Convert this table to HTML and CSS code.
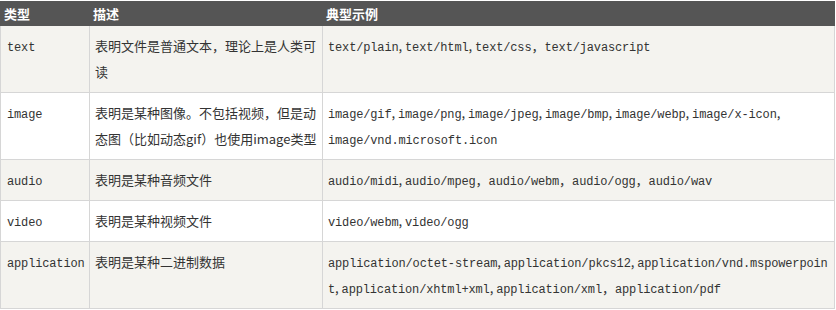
FILE: index.html
```html
<!DOCTYPE html>
<html lang="zh-CN">
<head>
    <meta charset="UTF-8">
    <title>MIME 类型</title>
    <link rel="stylesheet" href="styles.css">
</head>
<body>
    <table class="mime-table">
        <colgroup>
            <col class="col-type">
            <col class="col-desc">
            <col class="col-demo">
        </colgroup>
        <thead>
            <tr>
                <th>类型</th>
                <th>描述</th>
                <th>典型示例</th>
            </tr>
        </thead>
        <tbody>
            <tr class="odd">
                <td><code>text</code></td>
                <td>表明文件是普通文本，理论上是人类可读</td>
                <td><code>text/plain</code>, <code>text/html</code>, <code>text/css</code>，<code>text/javascript</code></td>
            </tr>
            <tr>
                <td><code>image</code></td>
                <td>表明是某种图像。不包括视频，但是动态图（比如动态gif）也使用image类型</td>
                <td><code>image/gif</code>, <code>image/png</code>, <code>image/jpeg</code>, <code>image/bmp</code>, <code>image/webp</code>, <code>image/x-icon</code>, <code>image/vnd.microsoft.icon</code></td>
            </tr>
            <tr class="odd">
                <td><code>audio</code></td>
                <td>表明是某种音频文件</td>
                <td><code>audio/midi</code>, <code>audio/mpeg</code>，<code>audio/webm</code>，<code>audio/ogg</code>，<code>audio/wav</code></td>
            </tr>
            <tr>
                <td><code>video</code></td>
                <td>表明是某种视频文件</td>
                <td><code>video/webm</code>, <code>video/ogg</code></td>
            </tr>
            <tr class="odd">
                <td><code>application</code></td>
                <td>表明是某种二进制数据</td>
                <td class="break"><code>application/octet-stream</code>, <code>application/pkcs12</code>, <code>application/vnd.mspowerpoint</code>, <code>application/xhtml+xml</code>, <code>application/xml</code>，<code>application/pdf</code></td>
            </tr>
        </tbody>
    </table>
</body>
</html>
```

FILE: styles.css
```css
body {
    margin: 0;
    padding-top: 1px;
    background: #fff;
    font-family: "Noto Sans CJK SC", "Noto Sans", sans-serif;
    font-size: 13px;
    color: #333;
}
.mime-table {
    width: 835px;
    table-layout: fixed;
    border-collapse: separate;
    border-spacing: 0;
}
.col-type {
    width: 90px;
}
.col-desc {
    width: 233px;
}
.col-demo {
    width: 512px;
}
.mime-table th {
    background: #555;
    color: #fff;
    font-weight: bold;
    text-align: left;
    height: 25px;
    line-height: 25px;
    padding: 0 3px;
}
.mime-table th:first-child {
    padding-left: 4px;
}
.mime-table td {
    padding: 7px 2px 7px 5px;
    line-height: 26px;
    vertical-align: top;
    border-right: 1px solid #d6d6d6;
    border-bottom: 1px solid #d6d6d6;
}
.mime-table td:first-child {
    border-left: 1px solid #d6d6d6;
    padding-left: 6px;
}
.mime-table tr.odd td {
    background: #f4f3ef;
}
code {
    font-family: "Liberation Mono", monospace;
    font-size: 12px;
    line-height: 1;
    letter-spacing: -0.15px;
    color: #333;
}
.break {
    word-break: break-all;
}
```
